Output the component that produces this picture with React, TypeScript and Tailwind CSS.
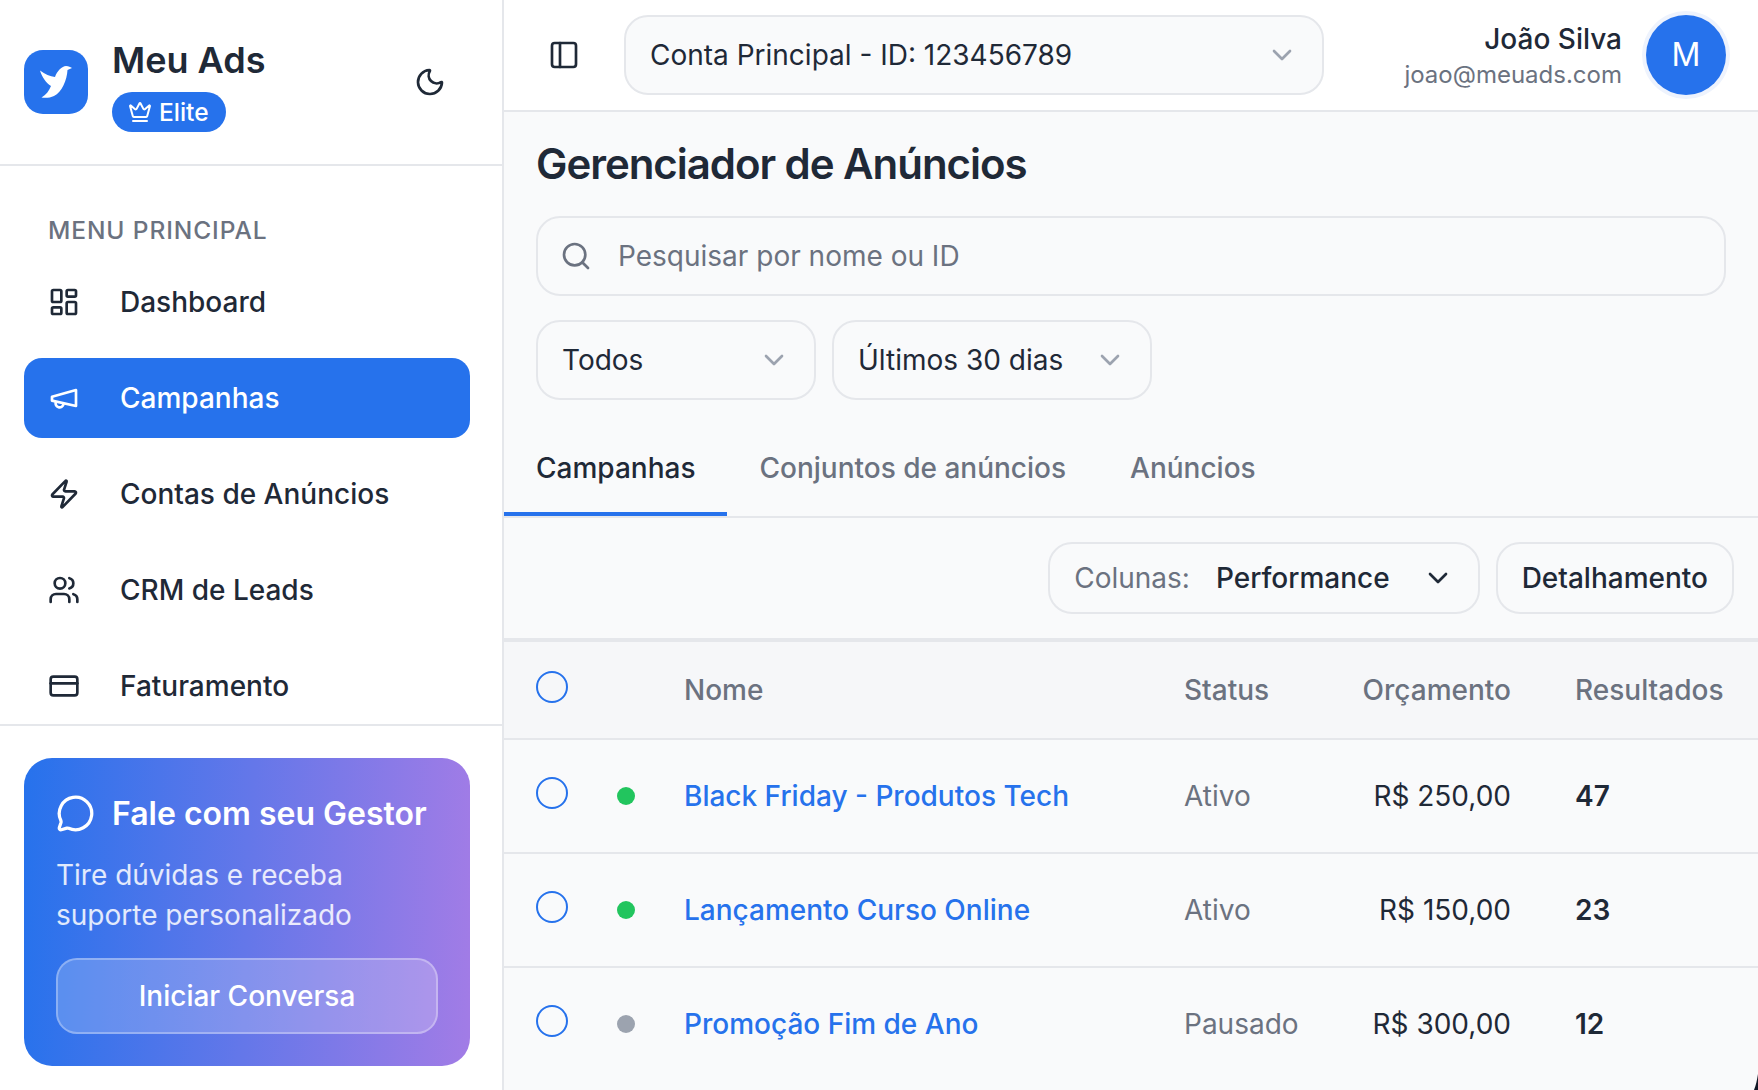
import {
  ChevronDown,
  CreditCard,
  Crown,
  LayoutDashboard,
  MessageCircle,
  Moon,
  PanelLeft,
  Search,
  Users,
  Zap,
} from 'lucide-react';

function MegaphoneIcon({ size, strokeWidth }: { size: number; strokeWidth: number }) {
  return (
    <svg width={size} height={size} viewBox="0 0 24 24" fill="none" stroke="currentColor" strokeWidth={strokeWidth} strokeLinecap="round" strokeLinejoin="round">
      <path d="m3 11 18-5v12L3 14v-3z" />
      <path d="M11.6 16.8a3 3 0 1 1-5.8-1.6" />
    </svg>
  );
}

const navItems = [
  { label: 'Dashboard', icon: LayoutDashboard },
  { label: 'Campanhas', icon: MegaphoneIcon, active: true },
  { label: 'Contas de Anúncios', icon: Zap },
  { label: 'CRM de Leads', icon: Users },
  { label: 'Faturamento', icon: CreditCard },
];

const campaigns = [
  { name: 'Black Friday - Produtos Tech', status: 'Ativo', budget: 'R$ 250,00', results: 47, dot: 'bg-[#22c55e]' },
  { name: 'Lançamento Curso Online', status: 'Ativo', budget: 'R$ 150,00', results: 23, dot: 'bg-[#22c55e]' },
  { name: 'Promoção Fim de Ano', status: 'Pausado', budget: 'R$ 300,00', results: 12, dot: 'bg-[#9ca3af]' },
];

function BirdLogo() {
  return (
    <svg viewBox="0 0 64 64" className="w-[64px] h-[64px]" aria-hidden="true">
      <path
        fill="#ffffff"
        d="M16 20.5 C21 24 26 26.5 31 27 C33 21 38 16 42 16 C45 16 46 17 48 18 L43.5 20 C43 30 38 42 30 46 C26 48 21 48 17.5 47.5 C22 45 25 41 27 36 C22 33 18 27 16 20.5 Z"
      />
    </svg>
  );
}

function Sidebar() {
  return (
    <aside className="w-[504px] shrink-0 h-full flex flex-col bg-white border-r-2 border-[#e5e7eb]">
      <div className="h-[166px] shrink-0 flex items-center pl-[24px] pr-[56px] border-b-2 border-[#e5e7eb]">
        <div className="w-[64px] h-[64px] rounded-[19px] bg-[#2672ec] flex items-center justify-center">
          <BirdLogo />
        </div>
        <div className="ml-[24px] flex-1 pt-[6px]">
          <div className="text-[36px] leading-[44px] font-semibold text-[#1f2937]">Meu Ads</div>
          <span className="mt-[10px] inline-flex items-center gap-[7px] h-[40px] pl-[16px] pr-[17px] rounded-full bg-[#2672ec] text-white text-[24.5px] font-medium">
            <Crown size={24} strokeWidth={2} />
            Elite
          </span>
        </div>
        <Moon size={32} strokeWidth={2} className="text-[#1f2937]" />
      </div>
      <div className="h-[560px] shrink-0 overflow-hidden pl-[24px] pr-[32px] pt-[47px] border-b-2 border-[#e5e7eb]">
        <div className="pl-[24px] text-[24.5px] leading-[35px] font-medium tracking-[0.9px] text-[#6b7280]">MENU PRINCIPAL</div>
        <nav className="mt-[14px] flex flex-col gap-[16px]">
          {navItems.map((item) => {
            const Icon = item.icon;
            return (
              <div
                key={item.label}
                className={`h-[80px] shrink-0 flex items-center gap-[40px] pl-[24px] rounded-[18px] text-[28px] font-medium ${
                  item.active ? 'bg-[#2672ec] text-white' : 'text-[#1f2937]'
                }`}
              >
                <Icon size={32} strokeWidth={2} />
                {item.label}
              </div>
            );
          })}
        </nav>
      </div>
      <div className="flex-1 pl-[24px] pr-[32px] pt-[32px]">
        <div className="h-[308px] rounded-[28px] px-[32px] pt-[31px] bg-[linear-gradient(92deg,#2672ec,#a27ce6)] text-white">
          <div className="flex items-center gap-[17px] text-[32px] leading-[49px] font-semibold">
            <MessageCircle size={39} strokeWidth={2} />
            Fale com seu Gestor
          </div>
          <p className="mt-[17px] text-[28px] leading-[40px] text-white/85">
            Tire dúvidas e receba
            <br />
            suporte personalizado
          </p>
          <button className="mt-[23px] w-full h-[76px] rounded-[21px] bg-white/20 border-2 border-white/30 text-[28px] font-medium text-white">
            Iniciar Conversa
          </button>
        </div>
      </div>
    </aside>
  );
}

function TopBar() {
  return (
    <header className="h-[112px] shrink-0 flex items-center bg-white border-b-2 border-[#e5e7eb] pl-[44px] pr-[32px]">
      <PanelLeft size={32} strokeWidth={2} className="text-[#1f2937]" />
      <div className="ml-[44px] w-[700px] h-[80px] flex items-center justify-between pl-[24px] pr-[24px] rounded-[24px] bg-[#f9fafb] border-2 border-[#e5e7eb] text-[28px] text-[#1f2937]">
        Conta Principal - ID: 123456789
        <ChevronDown size={32} strokeWidth={2} className="text-[#9ca3af]" />
      </div>
      <div className="ml-auto pt-[1px] text-right">
        <div className="text-[28px] leading-[38px] font-medium text-[#1f2937]">João Silva</div>
        <div className="-mt-[1px] text-[24px] leading-[35px] text-[#6b7280]">joao@meuads.com</div>
      </div>
      <div className="ml-[24px] w-[80px] h-[80px] rounded-full bg-[#2672ec] ring-[4px] ring-[#eef3fd] flex items-center justify-center text-[32px] text-white">
        M
      </div>
    </header>
  );
}

function FilterSelect({ label, width }: { label: string; width: string }) {
  return (
    <div className={`${width} h-[80px] flex items-center justify-between pl-[24px] pr-[24px] rounded-[24px] border-2 border-[#e5e7eb] text-[28px] text-[#1f2937]`}>
      {label}
      <ChevronDown size={32} strokeWidth={2} className="text-[#9ca3af]" />
    </div>
  );
}

const rowGrid = 'grid grid-cols-[32px_116px_500px_150px_177px_64px_1fr] items-center';

function CheckCircle() {
  return <span className="block w-[32px] h-[32px] rounded-full border-2 border-[#2672ec] -mt-[6px]" />;
}

function CampaignTable() {
  return (
    <div>
      <div className={`${rowGrid} h-[102px] pb-[1px] px-[32px] bg-[#f6f7f9] border-t-[4px] border-b-2 border-[#e5e7eb] text-[28px] font-medium text-[#6b7280]`}>
        <CheckCircle />
        <span />
        <span>Nome</span>
        <span>Status</span>
        <span className="text-right">Orçamento</span>
        <span />
        <span>Resultados</span>
      </div>
      {campaigns.map((row, i) => (
        <div key={row.name} className={`${rowGrid} h-[114px] px-[32px] text-[28px] border-b-2 ${i < campaigns.length - 1 ? 'border-[#e5e7eb]' : 'border-transparent'}`}>
          <CheckCircle />
          <span className={`w-[18px] h-[18px] rounded-full ml-[49px] ${row.dot}`} />
          <span className="font-medium text-[#2672ec] whitespace-nowrap">{row.name}</span>
          <span className="text-[#6b7280]">{row.status}</span>
          <span className="text-right whitespace-nowrap text-[#1f2937]">{row.budget}</span>
          <span />
          <span className="font-semibold text-[#1f2937]">{row.results}</span>
        </div>
      ))}
    </div>
  );
}

function AdsManager() {
  return (
    <div className="flex-1 overflow-hidden bg-[#f9fafb]">
      <div className="px-[32px] pt-[24px]">
        <h1 className="text-[42px] leading-[56px] font-semibold tracking-tight text-[#1f2937]">Gerenciador de Anúncios</h1>
        <div className="mt-[24px] h-[80px] flex items-center gap-[26px] pl-[22px] rounded-[24px] border-2 border-[#e5e7eb] text-[28px] text-[#6b7280]">
          <Search size={32} strokeWidth={2} />
          Pesquisar por nome ou ID
        </div>
        <div className="mt-[24px] flex gap-[16px]">
          <FilterSelect label="Todos" width="w-[280px]" />
          <FilterSelect label="Últimos 30 dias" width="w-[320px]" />
        </div>
      </div>
      <div className="mt-[24px] h-[94px] flex items-end border-b-2 border-[#e5e7eb] text-[28px] font-medium">
        <div className="h-[93px] px-[32px] flex items-center border-b-[4px] border-[#2672ec] text-[#1f2937]">Campanhas</div>
        <div className="h-[93px] pb-[4px] px-[32px] flex items-center text-[#6b7280]">Conjuntos de anúncios</div>
        <div className="h-[93px] pb-[4px] pl-[32px] flex items-center text-[#6b7280]">Anúncios</div>
      </div>
      <div className="h-[120px] flex items-center justify-end gap-[16px] pr-[24px] text-[28px] text-[#1f2937]">
        <div className="h-[72px] flex items-center pl-[24px] pr-[24px] rounded-[24px] border-2 border-[#e5e7eb] font-medium">
          <span className="text-[#6b7280] font-normal">Colunas:</span>
          <span className="ml-[26px]">Performance</span>
          <ChevronDown size={32} strokeWidth={2} className="ml-[32px]" />
        </div>
        <div className="h-[72px] flex items-center px-[24px] rounded-[24px] border-2 border-[#e5e7eb] font-medium">Detalhamento</div>
      </div>
      <CampaignTable />
    </div>
  );
}

export default function App() {
  return (
    <div className="relative h-[1090px] w-[1758px] overflow-hidden flex font-['Inter',sans-serif]">
      <Sidebar />
      <main className="flex-1 min-w-0 flex flex-col h-full">
        <TopBar />
        <AdsManager />
      </main>
      {/* window corner peeking in at the bottom right */}
      <svg viewBox="0 0 4 16" className="absolute right-0 bottom-0 w-[4px] h-[16px]" aria-hidden="true">
        <path fill="#111827" d="M4 0 L4 16 L0 16 C2 11 3 6 4 0 Z" />
      </svg>
    </div>
  );
}
